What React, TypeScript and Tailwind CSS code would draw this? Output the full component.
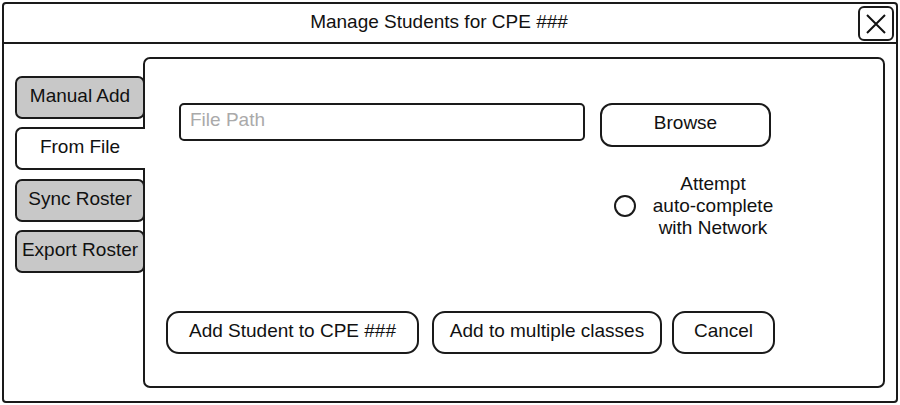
import { useState } from 'react';

const tabs = ['Manual Add', 'From File', 'Sync Roster', 'Export Roster'];

export default function App() {
  const [active, setActive] = useState('From File');
  const [checked, setChecked] = useState(false);

  return (
    <div
      className="w-[900px] h-[405px] bg-white p-[2px] text-[19px] text-[#111]"
      style={{ fontFamily: '"Liberation Sans", Arial, sans-serif' }}
    >
      <div className="flex flex-col h-[401px] border-2 border-[#1a1a1a] rounded-[4px]">
        {/* title bar */}
        <div className="relative flex items-center justify-center h-[40px] border-b-2 border-[#1a1a1a] shrink-0 pr-[22px]">
          <span className="text-[19px] -mt-[2px]">Manage Students for CPE ###</span>
          <button className="absolute right-[2px] top-[2px] w-[36px] h-[35px] border-2 border-[#1a1a1a] rounded-[6px] flex items-center justify-center bg-white">
            <svg width="24" height="24" viewBox="0 0 24 24" fill="none" stroke="#111" strokeWidth="2">
              <path d="M3 3 L21 21 M21 3 L3 21" />
            </svg>
          </button>
        </div>

        {/* body */}
        <div className="flex flex-1 px-[11px] py-[13px]">
          <div className="relative z-10 flex flex-col w-[130px] pt-[19px] shrink-0">
            {tabs.map((t, i) => {
              const on = t === active;
              return (
                <button
                  key={t}
                  onClick={() => setActive(t)}
                  className={
                    on
                      ? 'h-[43px] bg-white border-2 border-r-0 border-[#1a1a1a] rounded-l-[7px] flex items-center justify-center pr-[2px] pb-[2px]'
                      : 'h-[43px] bg-[#c8c8c8] border-2 border-[#1a1a1a] rounded-[7px] flex items-center justify-center whitespace-nowrap pb-[2px]'
                  }
                  style={{ marginTop: i === 0 ? 0 : i === 2 ? 9 : 8 }}
                >
                  {t}
                </button>
              );
            })}
          </div>

          <div className="flex flex-col flex-1 -ml-[2px] border-2 border-[#1a1a1a] rounded-[7px] pl-[21px] pt-[44px] pb-[32px]">
            <div className="flex items-start ml-[13px]">
              <input
                placeholder="File Path"
                className="w-[406px] h-[38px] border-2 border-[#1a1a1a] rounded-[5px] px-[9px] pb-[4px] outline-none placeholder:text-[#aaa]"
              />
              <button className="ml-[15px] w-[171px] h-[44px] border-2 border-[#1a1a1a] rounded-[12px] pb-[4px]">
                Browse
              </button>
            </div>

            <div className="flex items-center ml-[448px] mt-[26px]">
              <button
                onClick={() => setChecked(!checked)}
                className="w-[22px] h-[22px] border-2 border-[#1a1a1a] rounded-full flex items-center justify-center"
              >
                {checked && <span className="w-[10px] h-[10px] rounded-full bg-[#1a1a1a]" />}
              </button>
              <div className="w-[132px] ml-[11px] text-center leading-[22px]">
                Attempt
                <br />
                auto-complete
                <br />
                with Network
              </div>
            </div>

            <div className="flex mt-auto">
              <button className="w-[253px] h-[43px] border-2 border-[#1a1a1a] rounded-[13px] pb-[3px]">
                Add Student to CPE ###
              </button>
              <button className="ml-[13px] w-[230px] h-[43px] border-2 border-[#1a1a1a] rounded-[13px] pb-[3px]">
                Add to multiple classes
              </button>
              <button className="ml-[10px] w-[103px] h-[43px] border-2 border-[#1a1a1a] rounded-[13px] pb-[3px]">
                Cancel
              </button>
            </div>
          </div>
        </div>
      </div>
    </div>
  );
}
